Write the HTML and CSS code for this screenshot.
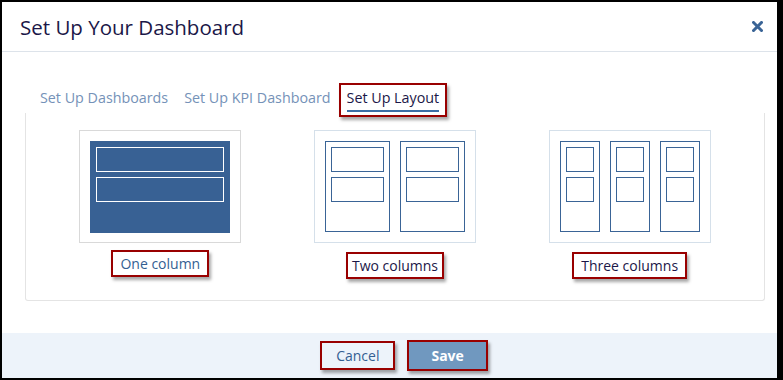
FILE: index.html
```html
<!DOCTYPE html>
<html lang="en">
<head>
  <meta charset="UTF-8">
  <title>Set Up Your Dashboard</title>
  <link rel="stylesheet" href="styles.css">
</head>
<body>

  <div id="modal">
    <div id="modal-header">
      <h2>Set Up Your Dashboard</h2>
      <span class="close-btn">
        <svg width="11" height="11" viewBox="0 0 11 11">
          <path d="M1.5 1.5 L9.5 9.5 M9.5 1.5 L1.5 9.5" stroke="#3a6496" stroke-width="3" stroke-linecap="square"/>
        </svg>
      </span>
    </div>

    <div id="modal-body">
      <div class="tabs">
        <div class="tab">Set Up Dashboards</div>
        <div class="tab">Set Up KPI Dashboard</div>
        <div class="tab active marked"><span>Set Up Layout</span></div>
      </div>

      <div class="layout-panel">
        <div class="layout-option">
          <div class="layout-card grey">
            <div class="one-col">
              <div class="slot"></div>
              <div class="slot"></div>
            </div>
          </div>
          <div class="layout-label selected marked">One column</div>
        </div>

        <div class="layout-option">
          <div class="layout-card">
            <div class="cols two">
              <div class="col"><div class="slot"></div><div class="slot"></div></div>
              <div class="col"><div class="slot"></div><div class="slot"></div></div>
            </div>
          </div>
          <div class="layout-label tight marked">Two columns</div>
        </div>

        <div class="layout-option">
          <div class="layout-card">
            <div class="cols three">
              <div class="col"><div class="slot"></div><div class="slot"></div></div>
              <div class="col"><div class="slot"></div><div class="slot"></div></div>
              <div class="col"><div class="slot"></div><div class="slot"></div></div>
            </div>
          </div>
          <div class="layout-label marked">Three columns</div>
        </div>
      </div>
    </div>

    <div id="modal-footer">
      <button class="btn cancel-btn marked">Cancel</button>
      <button class="btn save-btn marked">Save</button>
    </div>
  </div>

</body>
</html>
```

FILE: styles.css
```css
* {
  margin: 0;
  padding: 0;
  box-sizing: border-box;
  font-family: 'Open Sans', sans-serif;
}

body {
  background: #000;
  padding: 2px 6px 2px 2px;
}

#modal {
  width: 775px;
  height: 376px;
  background: #fff;
  display: flex;
  flex-direction: column;
}

#modal-header {
  height: 50px;
  display: flex;
  align-items: center;
  justify-content: space-between;
  padding: 0 14px 0 18px;
  border-bottom: 1px solid #dde3ea;
}

#modal-header h2 {
  font-size: 20.5px;
  font-weight: 400;
  color: #1b1748;
  line-height: 24px;
}

.close-btn {
  display: flex;
  cursor: pointer;
}

#modal-body {
  padding: 31px 12px 0 23px;
}

/* annotation frames */
.marked {
  border: 2px solid #900;
  box-shadow: 2px 3px 3px rgba(0, 0, 0, 0.35);
}

.tabs {
  display: flex;
  height: 30px;
  padding-left: 7px;
}

.tab {
  height: 34px;
  padding: 5px 8px 0;
  font-size: 14.3px;
  line-height: 20px;
  color: #7592b8;
  white-space: nowrap;
}

.tab.active {
  padding: 3px 6px 0;
  color: #1b1748;
  background: #fff;
  position: relative;
  z-index: 1;
}

.tab.active span {
  display: inline-block;
  padding-bottom: 2px;
  border-bottom: 2px solid #3a6ea5;
}

.layout-panel {
  display: grid;
  grid-template-columns: repeat(3, 1fr);
  padding: 17px 17px 21px;
  border: 1px solid #e4e4e4;
  border-top: none;
  border-radius: 0 0 3px 3px;
}

.layout-option {
  display: flex;
  flex-direction: column;
  align-items: center;
}

.layout-card {
  width: 162px;
  height: 113px;
  padding: 10px;
  border: 1px solid #d5e0ea;
  cursor: pointer;
}

.layout-card.grey {
  border-color: #d9d9d9;
}

.one-col {
  height: 92px;
  background: #386194;
  padding: 6px;
  display: flex;
  flex-direction: column;
  gap: 5px;
}

.one-col .slot {
  height: 25px;
  border: 1px solid #fff;
}

.cols {
  display: flex;
  gap: 10px;
  height: 91px;
}

.col {
  flex: 1;
  border: 1px solid #3a6496;
  padding: 5px;
  display: flex;
  flex-direction: column;
  gap: 5px;
}

.col .slot {
  height: 25px;
  border: 1px solid #3a6496;
}

.layout-label {
  margin-top: 9px;
  height: 27px;
  padding: 0 7px;
  font-size: 14px;
  line-height: 23px;
  color: #1b1748;
}

.layout-label.tight {
  padding: 0 4px;
}

.layout-label.selected {
  color: #345f92;
  margin-top: 7px;
}

#modal-footer {
  margin-top: auto;
  height: 45px;
  background: #edf3fa;
  display: flex;
  align-items: center;
  justify-content: center;
  gap: 12px;
  padding-left: 29px;
}

.btn {
  font-size: 14px;
  cursor: pointer;
}

.cancel-btn {
  height: 29px;
  padding: 0 14px;
  background: transparent;
  color: #345f92;
}

.save-btn {
  height: 31px;
  padding: 0 22px;
  background: #7098bf;
  color: #fff;
  font-weight: 700;
}
```
